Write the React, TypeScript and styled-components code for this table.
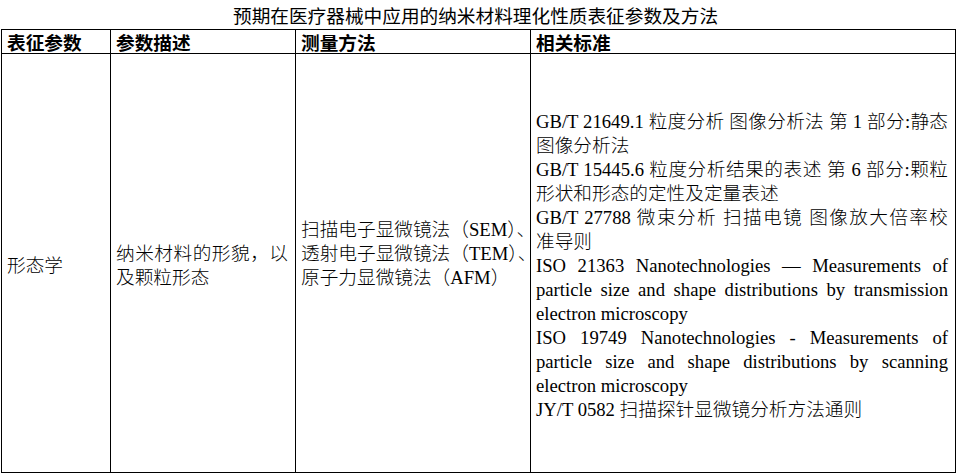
import React from "react";
import styled, { createGlobalStyle } from "styled-components";

const GlobalStyle = createGlobalStyle`
  html, body {
    margin: 0;
    padding: 0;
    background: #ffffff;
  }
  body {
    font-family: "Liberation Serif", "Noto Sans CJK SC", serif;
    color: #000000;
  }
`;

const Page = styled.div`
  width: 958px;
  padding-left: 1px;
  box-sizing: border-box;
`;

const Title = styled.h1`
  margin: 0;
  width: 955px;
  height: 29px;
  box-sizing: border-box;
  padding: 3px 6px 0 0;
  font: 400 18.67px/24px "Noto Sans CJK SC", sans-serif;
  text-align: center;
  color: #000000;
`;

const Table = styled.div`
  display: grid;
  grid-template-columns: 109px 185px 235px 425px;
  grid-template-rows: 24px 419px;
  width: 955px;
  box-sizing: border-box;
  border-top: 1px solid #000000;
  border-left: 1px solid #000000;
`;

const Cell = styled.div<{ $head?: boolean; $trail?: boolean }>`
  box-sizing: border-box;
  border-right: 1px solid #000000;
  border-bottom: 1px solid #000000;
  padding: ${(p) =>
    p.$head ? "0 7px 0 5px" : p.$trail ? "5px 4px 24px 5px" : "5px 7px 0 5px"};
  display: flex;
  flex-direction: column;
  justify-content: center;
  font-size: 18.67px;
  line-height: ${(p) => (p.$head ? "23px" : "24px")};
  font-weight: ${(p) => (p.$head ? 700 : 300)};
  font-family: ${(p) =>
    p.$head
      ? `"Noto Sans CJK SC", sans-serif`
      : `"Liberation Serif", "Noto Sans CJK SC", serif`};
`;

const Para = styled.div`
  text-align: justify;
`;

const MethodLine = styled.div`
  white-space: nowrap;
`;

const Tight = styled.span`
  font-feature-settings: "halt";
`;

const Standard = styled.div``;

const Line = styled.div<{ $fill?: boolean }>`
  white-space: nowrap;
  text-align: ${(p) => (p.$fill ? "justify" : "left")};
  text-align-last: ${(p) => (p.$fill ? "justify" : "left")};
`;

const headers = ["表征参数", "参数描述", "测量方法", "相关标准"];

const methods = [
  { name: "扫描电子显微镜法", abbr: "SEM", sep: "、" },
  { name: "透射电子显微镜法", abbr: "TEM", sep: "、" },
  { name: "原子力显微镜法", abbr: "AFM", sep: "" },
];

const standards: string[][] = [
  ["GB/T 21649.1 粒度分析  图像分析法  第 1 部分:静态", "图像分析法"],
  ["GB/T 15445.6 粒度分析结果的表述  第 6 部分:颗粒", "形状和形态的定性及定量表述"],
  ["GB/T 27788 微束分析  扫描电镜  图像放大倍率校", "准导则"],
  [
    "ISO 21363 Nanotechnologies — Measurements of",
    "particle size and shape distributions by transmission",
    "electron microscopy",
  ],
  [
    "ISO 19749 Nanotechnologies - Measurements of",
    "particle size and shape distributions by scanning",
    "electron microscopy",
  ],
  ["JY/T 0582 扫描探针显微镜分析方法通则"],
];

export default function App() {
  return (
    <>
      <GlobalStyle />
      <Page>
        <Title>预期在医疗器械中应用的纳米材料理化性质表征参数及方法</Title>
        <Table>
          {headers.map((h) => (
            <Cell key={h} $head>
              {h}
            </Cell>
          ))}
          <Cell>
            <Para>形态学</Para>
          </Cell>
          <Cell>
            <Para>纳米材料的形貌，以及颗粒形态</Para>
          </Cell>
          <Cell $trail>
            {methods.map((m) => (
              <MethodLine key={m.abbr}>
                {m.name}（{m.abbr}
                <Tight>）{m.sep}</Tight>
              </MethodLine>
            ))}
          </Cell>
          <Cell>
            {standards.map((lines, i) => (
              <Standard key={i}>
                {lines.map((l, j) => (
                  <Line key={j} $fill={j < lines.length - 1}>
                    {l}
                  </Line>
                ))}
              </Standard>
            ))}
          </Cell>
        </Table>
      </Page>
    </>
  );
}
